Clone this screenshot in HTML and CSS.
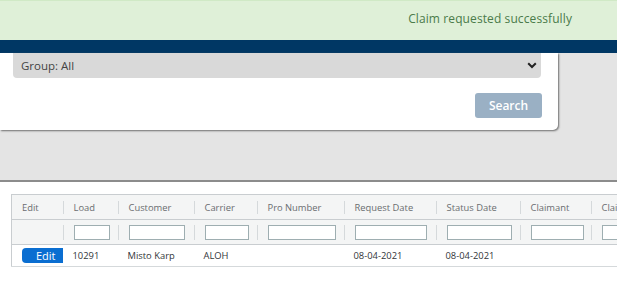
FILE: index.html
```html
<!DOCTYPE html>
<html lang="en">
<head>
  <meta charset="UTF-8">
  <title>Claims</title>
  <link rel="stylesheet" href="styles.css">
</head>
<body>
  <div class="alert">Claim requested successfully</div>
  <div class="navbar"></div>

  <div class="panel">
    <div class="select">
      <span>Group: All</span>
      <svg width="10" height="7" viewBox="0 0 10 7"><path d="M1.2 1.2 L5 5 L8.8 1.2" fill="none" stroke="#222" stroke-width="2"/></svg>
    </div>
    <div class="actions">
      <button class="search-btn">Search</button>
    </div>
  </div>

  <div class="results">
    <table class="grid">
      <colgroup>
        <col style="width:51px"><col style="width:55px"><col style="width:76px"><col style="width:63px">
        <col style="width:87px"><col style="width:92px"><col style="width:84px"><col style="width:71px"><col style="width:81px">
      </colgroup>
      <thead>
        <tr class="head">
          <th><div class="cell">Edit</div></th>
          <th><div class="cell sep">Load</div></th>
          <th><div class="cell sep">Customer</div></th>
          <th><div class="cell sep">Carrier</div></th>
          <th><div class="cell sep">Pro Number</div></th>
          <th><div class="cell sep">Request Date</div></th>
          <th><div class="cell sep">Status Date</div></th>
          <th><div class="cell sep">Claimant</div></th>
          <th><div class="cell sep">Claim Status</div></th>
        </tr>
        <tr class="filters">
          <th><div class="cell"></div></th>
          <th><div class="cell sep"><input style="width:36px"></div></th>
          <th><div class="cell sep"><input style="width:56px"></div></th>
          <th><div class="cell sep"><input style="width:44px"></div></th>
          <th><div class="cell sep"><input style="width:68px"></div></th>
          <th><div class="cell sep"><input style="width:72px"></div></th>
          <th><div class="cell sep"><input style="width:65px"></div></th>
          <th><div class="cell sep"><input style="width:53px"></div></th>
          <th><div class="cell sep"><input style="width:60px"></div></th>
        </tr>
      </thead>
      <tbody>
        <tr>
          <td><button class="edit-btn">Edit</button></td>
          <td>10291</td>
          <td>Misto Karp</td>
          <td>ALOH</td>
          <td></td>
          <td>08-04-2021</td>
          <td>08-04-2021</td>
          <td></td>
          <td></td>
        </tr>
      </tbody>
    </table>
  </div>
</body>
</html>
```

FILE: styles.css
```css
* { box-sizing: border-box; }

body {
  margin: 0;
  background: #e4e4e4;
  font-family: 'Open Sans', sans-serif;
  overflow: hidden;
  height: 283px;
}

.alert {
  height: 40px;
  background: #dff0d8;
  border-top: 1px solid #d0e9c6;
  color: #4a7b4a;
  font-size: 12px;
  letter-spacing: 0.1px;
  text-align: right;
  padding: 9px 45px 0 0;
}

.navbar {
  height: 13px;
  background: #003764;
}

.panel {
  width: 558px;
  background: #fff;
  padding: 0 17px 12px 13px;
  border-bottom-right-radius: 5px;
  box-shadow: 1px 1px 2px #6e6e6e;
}

.select {
  height: 25px;
  background: #d9d9d9;
  border-radius: 0 0 4px 4px;
  display: flex;
  align-items: center;
  justify-content: space-between;
  padding: 0 4px 0 8px;
  font-size: 11.5px;
  color: #444;
}

.actions {
  display: flex;
  justify-content: flex-end;
  margin-top: 15px;
}

.search-btn {
  width: 67px;
  height: 25px;
  border: none;
  border-radius: 3px;
  background: #9ab0c4;
  color: #fff;
  font-family: 'Open Sans', sans-serif;
  font-weight: 600;
  font-size: 12px;
  margin-right: -1px;
}

.results {
  margin-top: 50px;
  background: #fff;
  border-top: 2px solid #8c8c8c;
  padding: 12px 0 0 11px;
  height: 200px;
}

.grid {
  border-collapse: collapse;
  table-layout: fixed;
  width: 660px;
  font-size: 9.4px;
  border: 1px solid #c9cdd0;
  border-right: none;
}

.grid th {
  background: #f4f5f5;
  font-weight: normal;
  color: #6a6d70;
  text-align: left;
  padding: 0;
  border-bottom: 1px solid #c9cdd0;
}

.head th { height: 25px; }
.filters th { height: 25px; }

.cell {
  padding-left: 10px;
  line-height: 13px;
  min-height: 13px;
  white-space: nowrap;
}

.cell.sep {
  border-left: 1px solid #d5d9db;
}

.filters .cell {
  line-height: 15px;
  min-height: 15px;
}

.filters input {
  display: block;
  height: 15px;
  border: 1px solid #9eaeb1;
  background: #fff;
  padding: 0;
}

.grid td {
  height: 22px;
  padding: 0 0 0 10px;
  color: #32363a;
  border-bottom: 1px solid #d5d9db;
  white-space: nowrap;
}

.edit-btn {
  display: block;
  width: 41px;
  height: 15px;
  border: none;
  border-radius: 4px 0 0 4px;
  background: #0a6ed1;
  color: #fff;
  font-family: 'Open Sans', sans-serif;
  font-size: 11px;
  line-height: 15px;
  padding: 0 0 0 14px;
  text-align: left;
}
```
